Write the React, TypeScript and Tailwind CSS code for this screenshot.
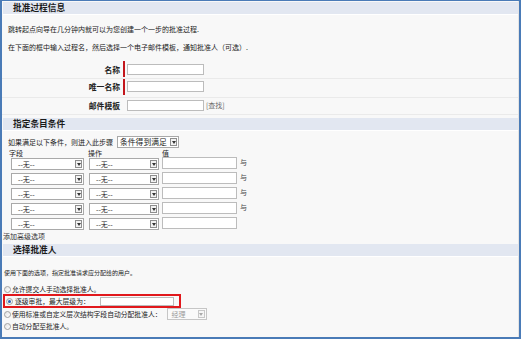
import React from 'react';

const Arrow = ({ muted }: { muted?: boolean }) => (
  <span className={`mr-px flex h-[8px] w-[7px] items-center justify-center border ${muted ? 'border-[#c8c8c8] bg-[#f6f6f6]' : 'border-[#8e8e8e] bg-[#f2f2f2]'}`}>
    <svg width="4" height="3" viewBox="0 0 4 3">
      <path d="M0 0h4L2 3z" fill={muted ? '#aaa' : '#333'} />
    </svg>
  </span>
);

const Select = ({ w, label, big }: { w: string; label: string; big?: boolean }) => (
  <div className={`flex h-[12px] items-center border border-[#a9a9a9] bg-white ${w}`}>
    <span className={`flex-1 whitespace-nowrap leading-none ${big ? 'pl-[2px] text-[7.8px]' : 'pl-[6px] text-[7px]'}`}>{label}</span>
    <Arrow />
  </div>
);

const Input = ({ w, h = 'h-[11px]' }: { w: string; h?: string }) => (
  <div className={`border border-[#bcbcbc] bg-white ${w} ${h}`} />
);

const Header = ({ title }: { title: string }) => (
  <div className="ml-px flex h-[13px] items-center border-b border-white bg-[#e2e7f1] pl-[10px] text-[8.7px] font-bold leading-none text-[#1a1a1a]">
    {title}
  </div>
);

const Radio = ({ checked }: { checked?: boolean }) => (
  <span className="flex h-[7px] w-[7px] shrink-0 items-center justify-center rounded-full border border-[#a0a0a0] bg-gradient-to-br from-[#e2e2e2] to-white">
    {checked && <span className="h-[3px] w-[3px] rounded-full bg-[#2a5fb8]" />}
  </span>
);

const FieldRow = ({ label, req, h, mt, extra }: { label: string; req?: boolean; h: string; mt: string; extra?: boolean }) => (
  <div className={`flex items-start border-b border-[#eaeaea] ${h}`}>
    <div className={`flex w-[118px] justify-end text-[7.8px] font-bold leading-[11px] ${mt}`}>{label}</div>
    <div className={`ml-[3px] h-[16px] w-[2px] ${req ? 'bg-[#c3161c]' : ''}`} />
    <div className={`ml-[2px] flex items-center ${mt}`}>
      <Input w="w-[77px]" />
      {extra && <span className="ml-[2px] text-[7px] leading-none text-[#666]">[查找]</span>}
    </div>
  </div>
);

export default function App() {
  const conds = [true, true, true, true, false];

  return (
    <div className="h-[339px] w-[522px] bg-white">
      <div className="h-[339px] w-[521px] overflow-hidden border-b-2 border-l-2 border-r-2 border-t border-[#4a7bb7] bg-[#f8f8f8] font-['Noto_Sans_CJK_SC',sans-serif] text-[#222]">
        <div className="h-full border-r border-[#e4e4e4]">
          <div className="h-px" />
          <Header title="批准过程信息" />

          <div className="pl-[6px] pt-[5px] text-[7px]">
            <div className="h-[18px] leading-[18px]">跳转起点向导在几分钟内就可以为您创建一个一步的批准过程.</div>
            <div className="h-[18px] leading-[18px]">在下面的框中输入过程名，然后选择一个电子邮件模板，通知批准人（可选）.</div>
          </div>

          <div className="mt-[5px]">
            <FieldRow label="名称" req h="h-[18px]" mt="mt-[3px]" />
            <FieldRow label="唯一名称" req h="h-[19px]" mt="mt-[2px]" />
            <FieldRow label="邮件模板" h="h-[17px]" mt="mt-[2px]" extra />
          </div>

          <div className="mt-[3px]">
            <Header title="指定条目条件" />
          </div>

          <div className="mt-[4px] flex h-[14px] items-center pl-[6px] text-[7px]">
            <span className="leading-none">如果满足以下条件，则进入此步骤</span>
            <span className="ml-[4px]">
              <Select w="w-[62px]" label="条件得到满足" big />
            </span>
          </div>

          <div className="flex h-[8px] items-center pl-[7px] text-[7px] leading-none">
            <span className="w-[79px]">字段</span>
            <span className="w-[74px]">操作</span>
            <span>值</span>
          </div>

          <div className="pl-[9px]">
            {conds.map((and, i) => (
              <div key={i} className="flex h-[15px] items-start">
                <div className="mt-px">
                  <Select w="w-[73px]" label="--无--" />
                </div>
                <div className="ml-[5px] mt-px">
                  <Select w="w-[70px]" label="--无--" />
                </div>
                <div className="ml-[3px]">
                  <Input w="w-[75px]" h="h-[12px]" />
                </div>
                {and && <span className="ml-[3px] mt-[2px] text-[7px] leading-none text-[#444]">与</span>}
              </div>
            ))}
          </div>

          <div className="flex h-[8px] items-center pl-px text-[7px] leading-none text-[#333]">添加高级选项</div>

          <div className="mt-[4px]">
            <Header title="选择批准人" />
          </div>

          <div className="mt-[9px] flex h-[14px] items-center pl-[2px] text-[6px] leading-none">
            使用下面的选项，指定批准请求应分配给的用户。
          </div>

          <div className="mt-[5px] text-[6.8px] leading-none">
            <div className="flex h-[9px] items-center gap-px pl-[2px]">
              <Radio />
              <span>允许提交人手动选择批准人。</span>
            </div>
            <div className="ml-px flex h-[14px] w-[178px] items-center border-2 border-[#e1181c] pl-px">
              <Radio checked />
              <span className="ml-[2px]">逐级审批，最大层级为：</span>
              <span className="ml-[10px]">
                <Input w="w-[74px]" h="h-[9px]" />
              </span>
            </div>
            <div className="flex h-[12px] items-center gap-px pl-[2px]">
              <Radio />
              <span>使用标准或自定义层次结构字段自动分配批准人：</span>
              <div className="ml-[4px] flex h-[12px] w-[40px] items-center border border-[#c6c6c6] bg-[#fafafa]">
                <span className="flex-1 pl-[4px] text-[7px] text-[#9a9a9a]">经理</span>
                <Arrow muted />
              </div>
            </div>
            <div className="flex h-[12px] items-center gap-px pl-[2px]">
              <Radio />
              <span>自动分配至批准人。</span>
            </div>
          </div>
        </div>
      </div>
    </div>
  );
}
